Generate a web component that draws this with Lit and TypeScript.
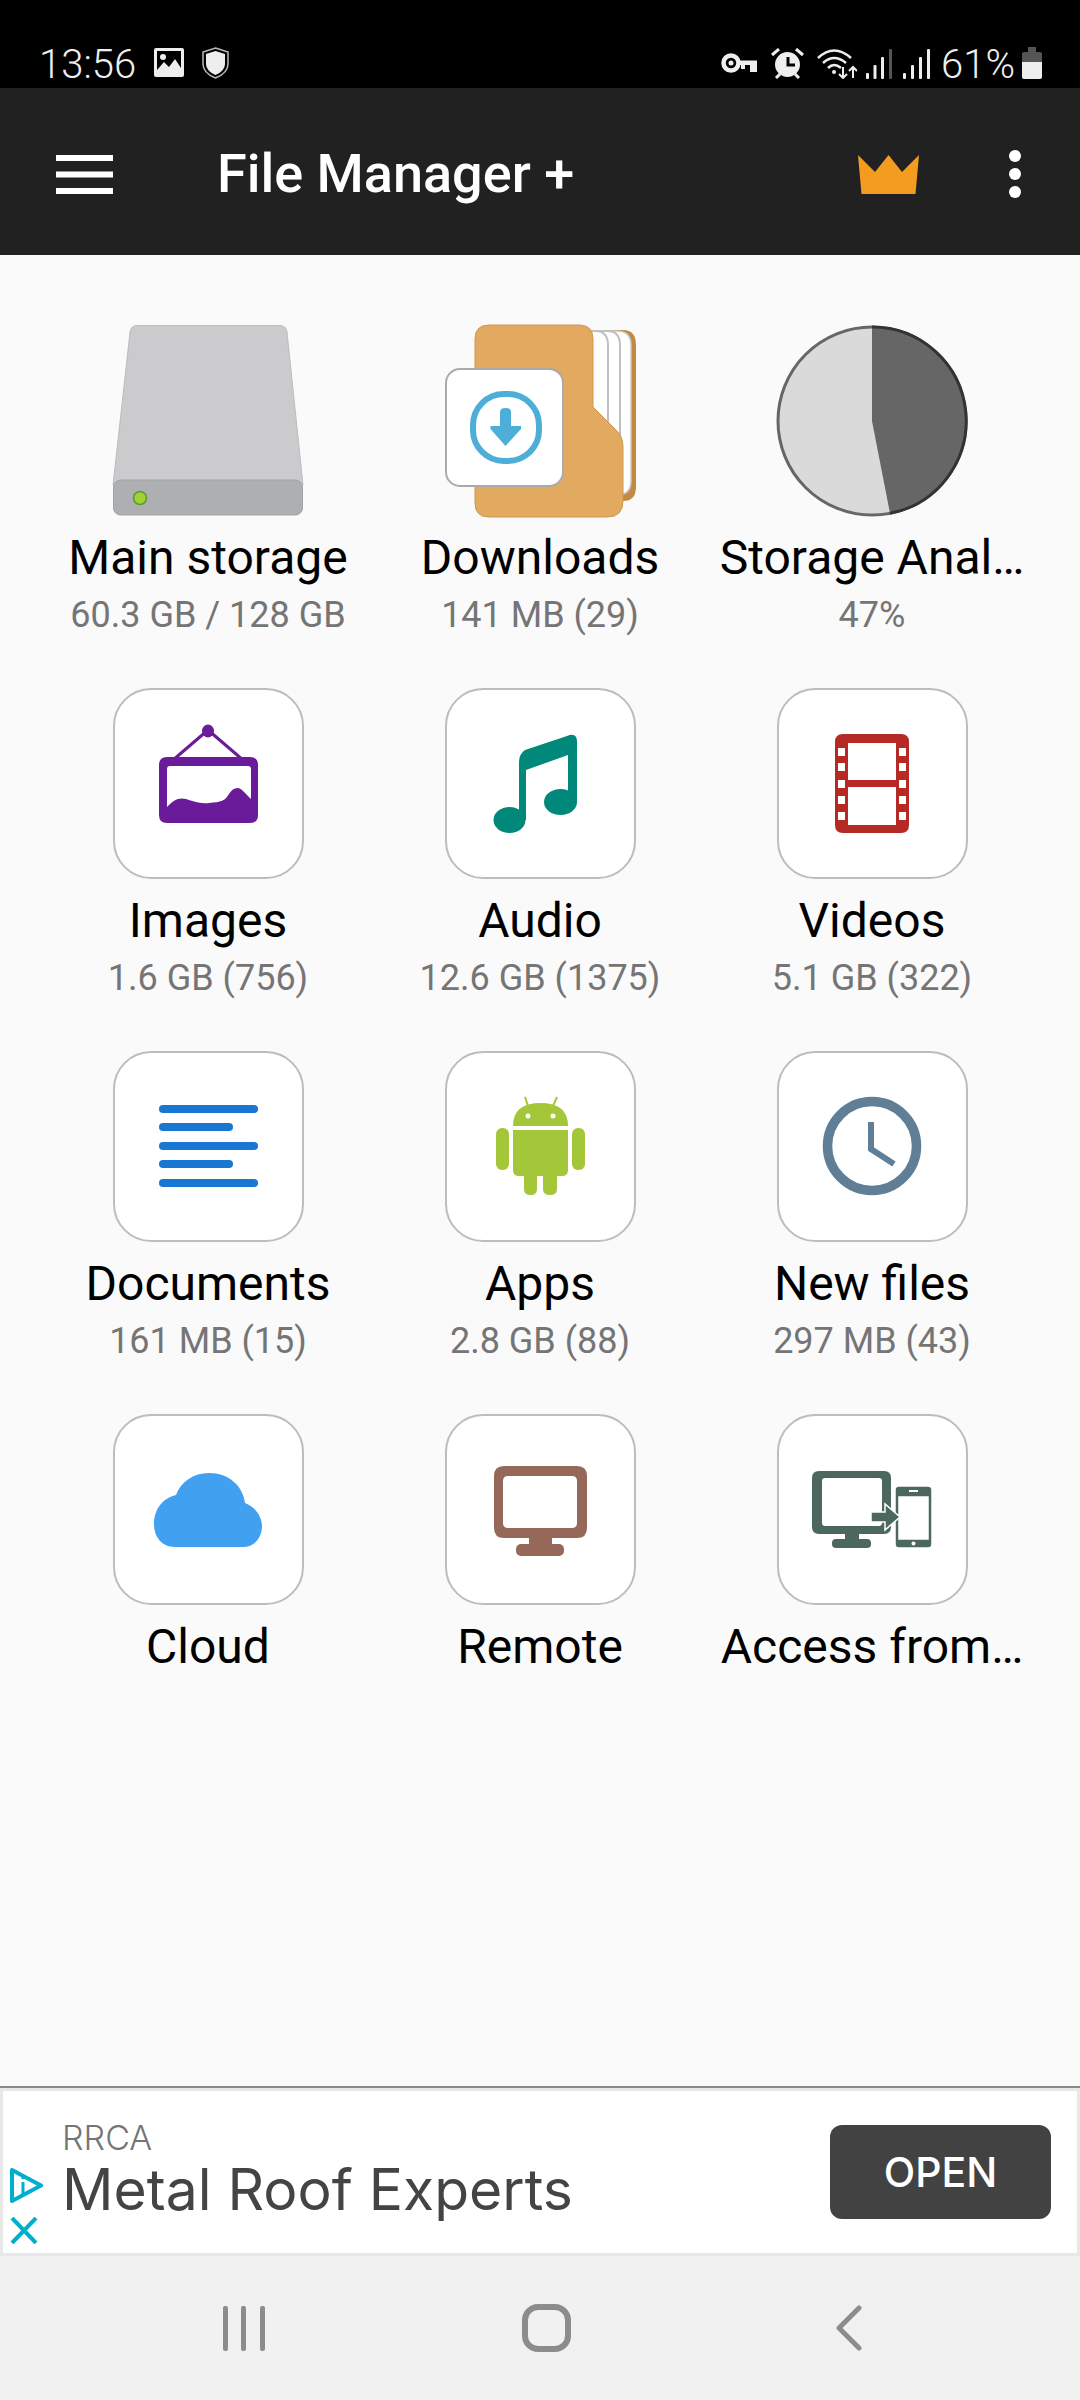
import { LitElement, html, css, svg } from "lit";
import { customElement } from "lit/decorators.js";

const tiles = [
  { name: "Main storage", sub: "60.3 GB / 128 GB", icon: "storage", bare: true },
  { name: "Downloads", sub: "141 MB (29)", icon: "downloads", bare: true },
  { name: "Storage Anal…", sub: "47%", icon: "pie", bare: true },
  { name: "Images", sub: "1.6 GB (756)", icon: "images" },
  { name: "Audio", sub: "12.6 GB (1375)", icon: "audio" },
  { name: "Videos", sub: "5.1 GB (322)", icon: "videos" },
  { name: "Documents", sub: "161 MB (15)", icon: "documents" },
  { name: "Apps", sub: "2.8 GB (88)", icon: "apps" },
  { name: "New files", sub: "297 MB (43)", icon: "clock" },
  { name: "Cloud", sub: "", icon: "cloud" },
  { name: "Remote", sub: "", icon: "remote" },
  { name: "Access from…", sub: "", icon: "access" },
];

// all tile icons are drawn in the 191px box of the tile
const icons: Record<string, unknown> = {
  storage: svg`
    <path d="M24 0.5H167Q173 0.5 174 7L190 160H0L17 7Q18 0.5 24 0.5Z" fill="#cbcbcd" stroke="#bdbdbf"/>
    <rect x="0.5" y="155" width="189" height="35" rx="7" fill="#aeafb1" stroke="#a2a3a5"/>
    <ellipse cx="27" cy="173" rx="6.5" ry="6.5" fill="#a4d037" stroke="#5c9a2c" stroke-width="1.5"/>`,
  downloads: svg`
    <path d="M140 5H178Q191 5 191 20V162Q191 176 178 176H150Z" fill="#c38a42"/>
    <path d="M140 6H172Q186 6 186 20V156Q186 170 172 170H150Z" fill="#fff" stroke="#c8c8c8" stroke-width="1.500"/>
    <path d="M140 6H162Q175 6 175 20V150Q175 160 165 160H150Z" fill="#fff" stroke="#c0c0c0" stroke-width="2"/>
    <path d="M140 6H150Q163 6 163 20V140Q163 150 153 150H150Z" fill="#fff" stroke="#c0c0c0" stroke-width="2"/>
    <path d="M44 0H134Q148 0 148 14V82L172 106Q178 112 178 122V176Q178 192 162 192H44Q30 192 30 178V14Q30 0 44 0Z" fill="#e2aa60" stroke="#cf9550" stroke-width="1"/>
    <rect x="1" y="44" width="117" height="117" rx="14" fill="#fff" stroke="#aaa" stroke-width="2"/>
    <rect x="28" y="69" width="66" height="67" rx="31" fill="none" stroke="#4dafd8" stroke-width="6"/>
    <path d="M55 87Q55 83 60.500 83Q66 83 66 87V101H76V104L60.500 121L45.500 104V101H55Z" fill="#4dafd8"/>`,
  pie: svg`
    <circle cx="95" cy="96" r="94" fill="#dadada" stroke="#666" stroke-width="3"/>
    <path d="M95 2A94 94 0 0 1 113 188.300L95 96Z" fill="#666"/>
    <path d="M95 2A94 94 0 0 1 113 188.300" fill="none" stroke="#333" stroke-width="3"/>`,
  images: svg`
    <path d="M95 42L60 72M95 42L130 72" stroke="#6a1b9a" stroke-width="3" fill="none"/>
    <ellipse cx="95" cy="43" rx="6" ry="6.500" fill="#6a1b9a"/>
    <path fill-rule="evenodd" fill="#6a1b9a" d="M54 69H137Q145 69 145 77V127Q145 135 137 135H54Q46 135 46 127V77Q46 69 54 69ZM57 78Q54 78 54 81V119C60 112 66 109 73 111C80 113 86 116 96 115C108 114 112 113 116 106C120 99 126 98 130 103C133 106 135 108 138 111V81Q138 78 135 78Z"/>`,
  audio: svg`
    <g fill="#00897b">
      <path d="M74 132V74Q74 66 80 62L122 48Q132 44 132 54V114H123V67L81 82V132Z"/>
      <ellipse cx="64.500" cy="132" rx="16" ry="13"/>
      <ellipse cx="115.500" cy="114" rx="16.500" ry="13"/>
    </g>`,
  videos: svg`
    <path fill="#b52a25" fill-rule="evenodd" d="M66 46H124Q132 46 132 54V137Q132 145 124 145H66Q58 145 58 137V54Q58 46 66 46ZM71 55V92H119V55ZM71 99V137H119V99Z"/>
    <g fill="#fff">
      ${[60, 75, 92, 108, 124].map(
        (y) => svg`<rect x="61" y=${y} width="7" height="8"/><rect x="122" y=${y} width="7" height="8"/>`
      )}
    </g>`,
  documents: svg`
    <g fill="#1976d2">
      <rect x="46" y="54" width="99" height="8" rx="4"/>
      <rect x="46" y="72" width="74" height="8" rx="4"/>
      <rect x="46" y="91" width="99" height="8" rx="4"/>
      <rect x="46" y="109" width="74" height="8" rx="4"/>
      <rect x="46" y="128" width="99" height="8" rx="4"/>
    </g>`,
  apps: svg`
    <g fill="#a4c639">
      <path d="M68 75Q68 52 95.500 52Q123 52 123 75Z"/>
      <path d="M68 79H123V119Q123 125 117 125H112V138Q112 144 105 144Q98 144 98 138V125H92V138Q92 144 85.500 144Q79 144 79 138V125H74Q68 125 68 119Z"/>
      <rect x="51" y="77" width="13" height="42" rx="6"/>
      <rect x="127" y="77" width="13" height="42" rx="6"/>
    </g>
    <path d="M80 46L83 55M112 46L108 55" stroke="#a4c639" stroke-width="2" fill="none"/>
    <circle cx="83" cy="65" r="2.500" fill="#fff"/><circle cx="108" cy="65" r="2.500" fill="#fff"/>`,
  clock: svg`
    <circle cx="95" cy="95" r="44.500" fill="none" stroke="#607f96" stroke-width="9.500"/>
    <path d="M94 71V98L117 113" fill="none" stroke="#607f96" stroke-width="6"/>`,
  cloud: svg`
    <path fill="#42a0f0" d="M62 133C48 133 41 122 41 110C41 95 50 84 63 81C68 68 80 59 96 59C116 59 130 72 132 89C142 93 149 102 149 112C149 124 141 133 130 133Z"/>`,
  remote: svg`
    <g fill="#95685a">
      <path fill-rule="evenodd" d="M59 52H132Q142 52 142 62V114Q142 124 132 124H59Q49 124 49 114V62Q49 52 59 52ZM63 62Q58 62 58 67V109Q58 114 63 114H127Q132 114 132 109V67Q132 62 127 62Z"/>
      <rect x="84" y="124" width="23" height="8"/>
      <rect x="71" y="130" width="48" height="12" rx="5"/>
    </g>`,
  access: svg`
    <g fill="#4b675e">
      <path fill-rule="evenodd" d="M42 57H107Q114 57 114 64V113Q114 120 107 120H42Q35 120 35 113V64Q35 57 42 57ZM48 64Q45 64 45 67V109Q45 112 48 112H102Q105 112 105 109V67Q105 64 102 64Z"/>
      <rect x="68" y="120" width="14" height="7"/>
      <rect x="55" y="125" width="39" height="9" rx="4"/>
      <path fill-rule="evenodd" stroke="#fff" stroke-width="1.500" d="M122 72H151Q155 72 155 76V130Q155 134 151 134H122Q118 134 118 130V76Q118 72 122 72ZM122 83V125H151V83Z"/>
      <path d="M94 98H108V90L123 103L108 116V108H94Z" stroke="#fff" stroke-width="1.500"/>
    </g>
    <rect x="132" y="76" width="9" height="2" fill="#fff"/>
    <circle cx="136.500" cy="129.500" r="2" fill="#fff"/>`,
};

@customElement("app-root")
export class AppRoot extends LitElement {
  static styles = css`
    :host {
      display: flex;
      flex-direction: column;
      width: 1080px;
      height: 2400px;
      font-family: Roboto, "Liberation Sans", sans-serif;
      background: #fafafa;
    }
    svg {
      display: block;
    }
    .status {
      height: 88px;
      box-sizing: border-box;
      padding: 47px 38px 0 39px;
      background: #000;
      color: #eee;
      display: flex;
      align-items: flex-start;
      flex-shrink: 0;
    }
    .clock {
      font-size: 40px;
      font-weight: 300;
      line-height: 40px;
      margin: -2px 18px 0 0;
    }
    .status-right {
      margin-left: auto;
      display: flex;
      align-items: flex-start;
    }
    .battery-text {
      font-size: 40px;
      font-weight: 300;
      line-height: 40px;
      margin: -2px 7px 0 11px;
    }
    .toolbar {
      height: 167px;
      background: #212121;
      display: flex;
      align-items: center;
      padding: 5px 59px 0 56px;
      box-sizing: border-box;
      flex-shrink: 0;
      color: #fff;
    }
    .title {
      font-size: 54px;
      font-weight: 500;
      margin-left: 104px;
      flex: 1;
      line-height: 60px;
    }
    .crown {
      margin-right: 90px;
    }
    .menu {
      display: flex;
      flex-direction: column;
      gap: 6px;
      width: 12px;
    }
    .menu span {
      width: 12px;
      height: 12px;
      border-radius: 50%;
      background: #fff;
    }
    .grid {
      flex: 1;
      display: grid;
      grid-template-columns: repeat(3, 332px);
      grid-auto-rows: 363px;
      padding: 70px 42px 0;
    }
    .tile {
      display: flex;
      flex-direction: column;
      align-items: center;
    }
    .box {
      width: 191px;
      height: 191px;
      box-sizing: border-box;
      flex-shrink: 0;
    }
    .box.framed {
      background: #fff;
      border: 2px solid #bdbdbd;
      border-radius: 38px;
    }
    .box.framed svg {
      margin: -2px;
    }
    .name {
      font-size: 48px;
      line-height: 56px;
      margin-top: 14px;
      color: #000;
      white-space: nowrap;
    }
    .sub {
      font-size: 36px;
      line-height: 42px;
      margin-top: 8px;
      color: #757575;
      white-space: nowrap;
    }
    .ad {
      border-top: 2px solid #8a8a8a;
      background: #e8e8e8;
      padding: 3px;
      flex-shrink: 0;
    }
    .ad-inner {
      height: 162px;
      background: #fff;
      display: flex;
      align-items: center;
      padding-right: 26px;
    }
    .ad-marks {
      align-self: flex-end;
      display: flex;
      flex-direction: column;
      gap: 14px;
      padding: 0 0 9px 7px;
      width: 33px;
      margin-right: 19px;
    }
    .ad-text {
      flex: 1;
    }
    .brand {
      font-family: Inter, sans-serif;
      font-size: 34px;
      font-weight: 300;
      line-height: 40px;
      color: #757575;
      margin-top: -6px;
    }
    .headline {
      font-family: Inter, sans-serif;
      font-size: 57px;
      line-height: 62px;
      color: #444;
      margin-top: 1px;
    }
    .open {
      width: 221px;
      height: 94px;
      border-radius: 12px;
      background: #424242;
      color: #fff;
      font-family: Inter, sans-serif;
      font-size: 41px;
      font-weight: 500;
      display: flex;
      align-items: center;
      justify-content: center;
    }
    .nav {
      height: 144px;
      flex-shrink: 0;
      background: #f1f1f1;
      display: grid;
      grid-template-columns: repeat(3, 302px);
      padding-left: 93px;
      align-items: center;
      justify-items: center;
    }
  `;

  render() {
    return html`
      <div class="status">
        <span class="clock">13:56</span>
        ${this.renderImageIcon()} ${this.renderShield()}
        <div class="status-right">
          ${this.renderStatusIcons()}
          <span class="battery-text">61%</span>
          ${this.renderBattery()}
        </div>
      </div>
      <div class="toolbar">
        <svg width="57" height="39" viewBox="0 0 57 39" fill="#fff">
          <rect width="57" height="6"/><rect y="16.500" width="57" height="6"/><rect y="33" width="57" height="6"/>
        </svg>
        <div class="title">File Manager +</div>
        <svg class="crown" width="61" height="39" viewBox="0 0 61 39">
          <path d="M0 0L17 17L30.500 0L44 17L61 0L57.500 39H3.500Z" fill="#f39c1f"/>
        </svg>
        <div class="menu"><span></span><span></span><span></span></div>
      </div>
      <div class="grid">
        ${tiles.map(
          (t) => html`
            <div class="tile">
              <div class="box ${t.bare ? "" : "framed"}">
                <svg width="191" height="193" viewBox="0 0 191 193" style="overflow:visible">${icons[t.icon]}</svg>
              </div>
              <div class="name">${t.name}</div>
              ${t.sub ? html`<div class="sub">${t.sub}</div>` : ""}
            </div>
          `
        )}
      </div>
      <div class="ad">
        <div class="ad-inner">
          <div class="ad-marks">
            <svg width="33" height="35" viewBox="0 0 33 35" fill="none" stroke="#00aecd" stroke-width="4">
              <path d="M2 2V33L31 17.500Z" stroke-linejoin="round"/>
              <path d="M13 14V26M13 8V11" stroke-width="3"/>
            </svg>
            <svg width="28" height="27" viewBox="0 0 28 27" fill="none" stroke="#00aecd" stroke-width="4">
              <path d="M2 1L26 26M26 1L2 26"/>
            </svg>
          </div>
          <div class="ad-text">
            <div class="brand">RRCA</div>
            <div class="headline">Metal Roof Experts</div>
          </div>
          <div class="open">OPEN</div>
        </div>
      </div>
      <div class="nav">
        <svg width="42" height="45" viewBox="0 0 42 45" fill="#8c8c8c">
          <rect width="5" height="45" rx="2"/><rect x="18" width="5" height="45" rx="2"/><rect x="37" width="5" height="45" rx="2"/>
        </svg>
        <svg width="49" height="48" viewBox="0 0 49 48" fill="none" stroke="#8c8c8c" stroke-width="6">
          <rect x="3" y="3" width="43" height="42" rx="13"/>
        </svg>
        <svg width="27" height="46" viewBox="0 0 27 46" fill="none" stroke="#8c8c8c" stroke-width="5" stroke-linecap="round" stroke-linejoin="round">
          <path d="M24 3L4 23L24 43"/>
        </svg>
      </div>
    `;
  }

  renderImageIcon() {
    return html`<svg width="30" height="29" viewBox="0 0 30 29" style="margin-top:1px">
      <path fill-rule="evenodd" fill="#eee" d="M2 0H28Q30 0 30 2V27Q30 29 28 29H2Q0 29 0 27V2Q0 0 2 0ZM3 22L10 14L15 19L21 11L27 20V3H3Z"/>
      <circle cx="9" cy="9" r="3" fill="#eee"/>
    </svg>`;
  }

  renderShield() {
    return html`<svg width="27" height="32" viewBox="0 0 27 32" style="margin-left:18px">
      <path d="M13.500 1L26 5V17Q26 26 13.500 31Q1 26 1 17V5Z" fill="none" stroke="#bbb" stroke-width="1.500"/>
      <path d="M13.500 4L23 7V17Q23 24 13.500 28Q4 24 4 17V7Z" fill="#eee"/>
    </svg>`;
  }

  renderStatusIcons() {
    return html`
      <svg width="36" height="22" viewBox="0 0 36 22" style="margin-top:5px">
        <circle cx="10" cy="11" r="7.500" fill="none" stroke="#eee" stroke-width="4.500"/>
        <path d="M17 8.500H36V20H29V13H24V17H20V13H17Z" fill="#eee"/>
        <circle cx="10" cy="11" r="2.500" fill="#eee"/>
      </svg>
      <svg width="33" height="31" viewBox="0 0 33 31" style="margin:1px 0 0 14px">
        <circle cx="16.500" cy="16.500" r="12.500" fill="#eee"/>
        <path d="M17 9V17H24" stroke="#000" stroke-width="3" fill="none"/>
        <path d="M1 7L8 1M32 7L25 1M5 30L9 26M28 30L24 26" stroke="#eee" stroke-width="3" fill="none"/>
      </svg>
      <svg width="40" height="32" viewBox="0 0 40 32" style="margin-left:13px" fill="none" stroke="#eee" stroke-width="2.500">
        <path d="M1 11Q17 -4 34 11M6 16Q17 6 29 16M11 21Q17 15 24 21"/>
        <circle cx="17" cy="25" r="2" fill="#eee" stroke="none"/>
        <path d="M26 20V31M22 27L26 31L30 27M36 31V21M32 24L36 20L40 24" stroke-width="2"/>
      </svg>
      <svg width="26" height="30" viewBox="0 0 26 30" style="margin:2px 0 0 9px">
        <rect x="0" y="24" width="3" height="6" rx="1" fill="#eee"/>
        <rect x="7.500" y="16" width="3" height="14" rx="1" fill="#eee"/>
        <rect x="15" y="8" width="3" height="22" rx="1" fill="#eee"/>
        <rect x="23" y="0" width="3" height="30" rx="1" fill="#555"/>
      </svg>
      <svg width="27" height="30" viewBox="0 0 27 30" style="margin:2px 0 0 11px">
        <rect x="0" y="24" width="3" height="6" rx="1" fill="#eee"/>
        <rect x="8" y="16" width="3" height="14" rx="1" fill="#eee"/>
        <rect x="16" y="8" width="3" height="22" rx="1" fill="#eee"/>
        <rect x="24" y="0" width="3" height="30" rx="1" fill="#eee"/>
      </svg>
    `;
  }

  renderBattery() {
    return html`<svg width="20" height="32" viewBox="0 0 20 32">
      <path d="M6 0H14V5H18Q20 5 20 7V15H0V7Q0 5 2 5H6Z" fill="#555"/>
      <path d="M0 15H20V30Q20 32 18 32H2Q0 32 0 30Z" fill="#eee"/>
    </svg>`;
  }
}
